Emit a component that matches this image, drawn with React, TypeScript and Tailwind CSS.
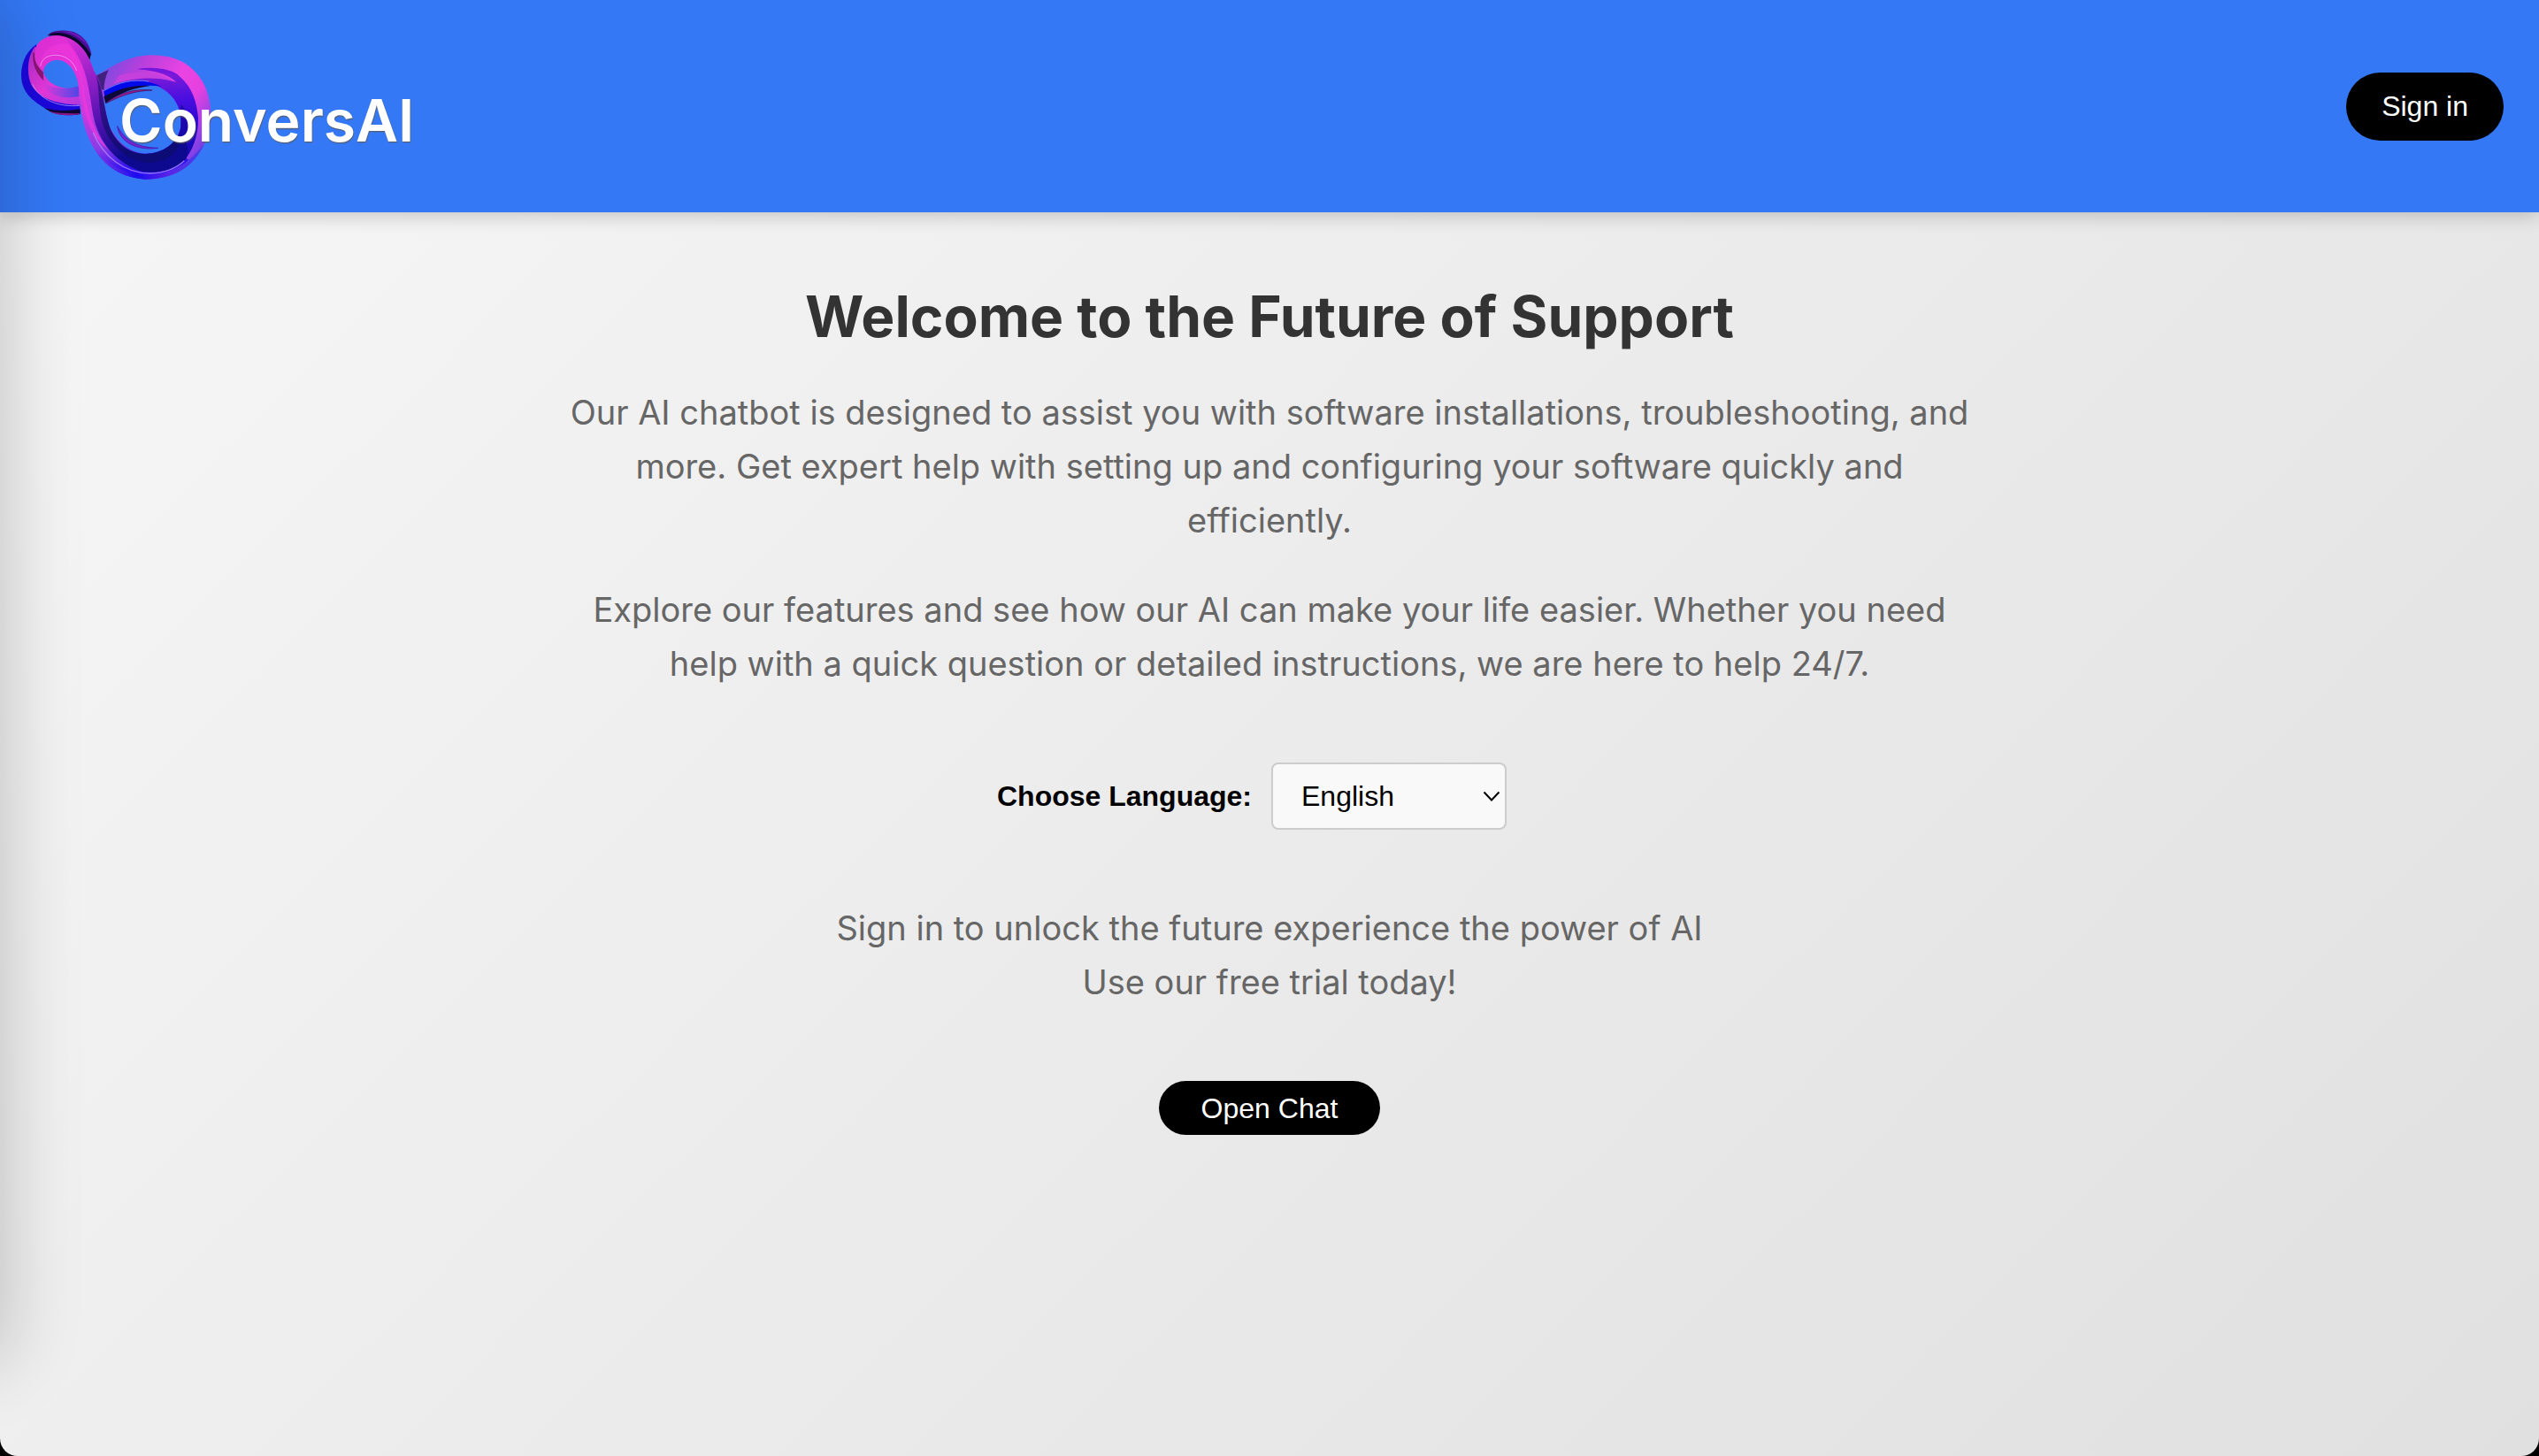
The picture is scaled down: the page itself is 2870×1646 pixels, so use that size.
import React from "react";

function Logo() {
  return (
    <svg viewBox="0 0 1440 720" className="h-[240px] w-[480px]" role="img" aria-label="ConversAI">
      <defs>
        <linearGradient id="band" x1="340" y1="250" x2="720" y2="500" gradientUnits="userSpaceOnUse">
          <stop offset="0" stopColor="#7a4be0" />
          <stop offset=".22" stopColor="#b83fdc" />
          <stop offset=".5" stopColor="#ea44e2" />
          <stop offset=".68" stopColor="#e640e0" />
          <stop offset=".84" stopColor="#a044e4" />
          <stop offset="1" stopColor="#5a3ce6" />
        </linearGradient>
        <linearGradient id="inner" x1="560" y1="230" x2="600" y2="590" gradientUnits="userSpaceOnUse">
          <stop offset="0" stopColor="#8a1ed6" />
          <stop offset=".3" stopColor="#4a0fe0" />
          <stop offset=".6" stopColor="#2408cc" />
          <stop offset="1" stopColor="#0c0c9c" />
        </linearGradient>
        <linearGradient id="strand" x1="200" y1="110" x2="400" y2="590" gradientUnits="userSpaceOnUse">
          <stop offset="0" stopColor="#e22fd8" />
          <stop offset=".25" stopColor="#e934dc" />
          <stop offset=".55" stopColor="#c93ae0" />
          <stop offset=".8" stopColor="#8a3ae6" />
          <stop offset="1" stopColor="#2a10ee" />
        </linearGradient>
        <linearGradient id="strandShade" x1="240" y1="130" x2="400" y2="540" gradientUnits="userSpaceOnUse">
          <stop offset="0" stopColor="#d92fd6" />
          <stop offset=".3" stopColor="#9a22c8" />
          <stop offset=".6" stopColor="#5f14b6" />
          <stop offset="1" stopColor="#0d0a90" />
        </linearGradient>
        <linearGradient id="leftRing" x1="110" y1="180" x2="270" y2="350" gradientUnits="userSpaceOnUse">
          <stop offset="0" stopColor="#b52ed0" />
          <stop offset=".5" stopColor="#ea38dc" />
          <stop offset="1" stopColor="#b23ade" />
        </linearGradient>
        <linearGradient id="ringInner" x1="160" y1="300" x2="270" y2="310" gradientUnits="userSpaceOnUse">
          <stop offset="0" stopColor="#d43ce0" />
          <stop offset="1" stopColor="#4c48e6" />
        </linearGradient>
        <linearGradient id="bottom" x1="330" y1="540" x2="690" y2="500" gradientUnits="userSpaceOnUse">
          <stop offset="0" stopColor="#7a36e4" />
          <stop offset=".35" stopColor="#1c0cf0" />
          <stop offset=".65" stopColor="#5a24e6" />
          <stop offset="1" stopColor="#4440ea" />
        </linearGradient>
      </defs>

      {/* right loop: outer band with the opening left clear */}
      <path d="M328 256C395 213 445 188 515 187C585 188 635 208 676 260C704 298 715 345 715 390C713 435 700 480 684 508C650 560 590 606 500 608V522C560 518 600 485 612 435C622 385 600 315 530 290C460 270 395 300 355 345Z" fill="url(#band)" />
      <path d="M352 306C420 268 480 258 555 268L598 278C575 258 545 242 465 234C520 228 575 232 612 262C650 295 668 345 672 400C673 460 655 515 615 555C570 588 520 590 480 588L490 522C555 520 600 485 612 435C620 380 600 320 530 290C460 275 410 290 355 325Z" fill="url(#inner)" />
      <path d="M465 234C525 224 590 236 610 260C575 247 520 240 465 234Z" fill="#7416dc" />
      <path d="M405 256C470 234 545 250 596 277C540 264 475 258 385 284Z" fill="#c640de" />
      <path d="M328 256L368 237C358 260 353 280 352 306L340 300Z" fill="#42207e" />
      <path d="M352 308C410 272 480 262 548 293C470 282 410 305 356 338Z" fill="#000ae8" />
      <path d="M352 308C405 277 450 268 505 276" fill="none" stroke="#6c7cf8" strokeWidth="3" />
      <path d="M352 328C405 299 455 288 510 291C460 297 410 312 358 350Z" fill="#0c0838" />
      <path d="M358 350C410 312 460 300 516 306C460 308 415 322 360 350Z" fill="#a3198e" stroke="#35105e" strokeWidth="2" />
      <path d="M613 354C634 372 645 400 642 440C632 495 590 545 530 570L500 522C570 518 605 480 613 430Z" fill="#150a9c" opacity=".7" />

      {/* left loop */}
      <path d="M160 121C175 103 205 103 228 104C275 108 304 145 310 184L302 198C280 140 225 115 160 121Z" fill="#4a0e96" />
      <path d="M172 113C225 105 270 125 308 184L304 204C275 140 225 120 165 122Z" fill="#0b062e" />
      <path d="M215 106C255 106 285 130 298 155C275 128 250 115 215 106Z" fill="#7a18c4" />
      <path d="M124 150C85 175 68 225 73 270C80 325 125 350 165 375C200 393 240 394 272 386L270 340C190 350 125 300 112 250Z" fill="#1b08dc" />
      <path d="M150 366C190 378 230 376 272 370V387C225 394 185 390 150 366Z" fill="#0e0734" />
      <path d="M165 378C200 384 240 386 270 384V388C230 394 190 390 165 378Z" fill="#8a1684" />
      <path d="M118 158C94 190 90 240 103 280C120 325 180 355 270 356V300C225 305 165 295 147 245C145 210 165 190 185 180Z" fill="url(#leftRing)" />
      <path d="M110 285C135 340 200 364 270 358" fill="none" stroke="#b9a0ff" strokeWidth="3" opacity=".75" />
      <path d="M150 280C185 306 230 303 268 292V326C225 336 180 330 155 300Z" fill="url(#ringInner)" />
      <path d="M112 178C108 215 122 250 148 274C145 240 148 215 160 195Z" fill="#8a1674" />

      {/* crossing strand */}
      <path d="M118 178C120 145 150 122 192 120C250 122 292 165 315 230C340 300 345 400 385 452C425 515 480 525 520 520L640 540C600 590 550 608 490 608C410 602 355 560 320 505C280 440 270 360 267 300C264 250 235 203 192 203C165 205 147 225 147 245C125 225 115 205 118 178Z" fill="url(#strand)" />
      <path d="M215 126C270 135 302 185 318 240L328 256C350 290 352 375 375 440C405 500 450 522 495 522C550 520 585 495 608 455C632 475 645 500 632 538C585 585 520 592 470 578C390 548 335 480 318 400C300 310 300 210 215 126Z" fill="url(#strandShade)" />
      <path d="M325 256C350 295 350 375 378 445C410 505 455 522 495 522C550 520 585 495 608 455C622 500 580 545 510 552C430 550 370 490 348 420C330 350 340 300 325 256Z" fill="#0d0b62" opacity=".6" />
      <path d="M230 150C275 190 275 280 296 360C310 420 335 470 370 510C310 465 288 400 280 330C274 260 270 200 200 178C165 178 143 200 140 225C135 190 165 140 230 150Z" fill="#ee38dc" opacity=".75" />
      <path d="M137 225C140 198 165 185 195 187C230 190 252 215 260 240" fill="none" stroke="#f6a0f4" strokeWidth="3" opacity=".8" />
      <path d="M320 505C370 570 440 593 510 592C590 590 650 545 690 490C660 565 590 608 495 608C410 603 355 565 320 505Z" fill="url(#bottom)" />
      <path d="M316 450C350 530 420 588 510 588C560 586 600 568 625 545" fill="none" stroke="#b48cff" strokeWidth="4" opacity=".8" />
      <path d="M398 428C405 480 460 512 536 502C480 500 430 488 398 428Z" fill="#7a24cc" stroke="#4a1eb8" strokeWidth="3" />

      <text
        x="405"
        y="480"
        fontFamily="Inter, sans-serif"
        fontWeight="600"
        fontSize="198"
        fill="#ffffff"
        className="[filter:drop-shadow(2px_4px_1px_rgba(90,90,90,0.8))]"
      >
        ConversAI
      </text>
    </svg>
  );
}

const paragraphs = [
  "Our AI chatbot is designed to assist you with software installations, troubleshooting, and more. Get expert help with setting up and configuring your software quickly and efficiently.",
  "Explore our features and see how our AI can make your life easier. Whether you need help with a quick question or detailed instructions, we are here to help 24/7.",
];

export default function App() {
  return (
    <div className="min-h-screen bg-black font-['Liberation_Sans',Arial,sans-serif]">
      <div className="relative flex min-h-screen flex-col overflow-hidden rounded-b-[20px] bg-linear-135 from-[#f7f7f7] to-[#e0e0e0]">
        {/* drawer parked off the left edge; only its shadow reaches the page */}
        <aside
          aria-hidden="true"
          className="absolute top-0 bottom-[110px] -left-[500px] z-20 w-[500px] shadow-[4px_0_80px_rgba(0,0,0,0.22)]"
        />

        <header className="relative z-10 flex items-center justify-between bg-[#3478f6] pr-10 shadow-[0_4px_20px_rgba(0,0,0,0.2)]">
          <Logo />
          <button type="button" className="h-[77px] rounded-full bg-black px-10 text-[32px] text-white">
            Sign in
          </button>
        </header>

        <main className="mx-auto flex w-full max-w-[1600px] flex-col items-center gap-[81px] pt-20 text-center font-[Inter,sans-serif] text-[38px] leading-[61px] text-[#666]">
          <section className="flex flex-col gap-10">
            <h1 className="text-[64px] leading-[76px] font-bold text-[#333]">Welcome to the Future of Support</h1>
            {paragraphs.map((text) => (
              <p key={text}>{text}</p>
            ))}
          </section>

          <div className="mr-10 flex items-center gap-[22px] font-['Liberation_Sans',Arial,sans-serif] text-[32px] leading-9 text-black">
            <label htmlFor="language" className="font-bold">
              Choose Language:
            </label>
            <div className="relative">
              <select
                id="language"
                defaultValue="English"
                className="h-[76px] w-[266px] appearance-none rounded-lg border-2 border-[#ccc] bg-[#f9f9f9] pl-8"
              >
                <option>English</option>
                <option>Spanish</option>
                <option>French</option>
                <option>German</option>
              </select>
              <svg
                aria-hidden="true"
                viewBox="0 0 20 12"
                className="pointer-events-none absolute top-8 right-[7px] h-3 w-5"
                fill="none"
                stroke="currentColor"
                strokeWidth="2"
              >
                <path d="M1.5 1.5 10 10.5 18.5 1.5" />
              </svg>
            </div>
          </div>

          <p>
            Sign in to unlock the future experience the power of AI
            <br />
            Use our free trial today!
          </p>

          <button
            type="button"
            className="h-[61px] rounded-full bg-black px-12 font-['Liberation_Sans',Arial,sans-serif] text-[32px] leading-9 text-white"
          >
            Open Chat
          </button>
        </main>
      </div>
    </div>
  );
}
